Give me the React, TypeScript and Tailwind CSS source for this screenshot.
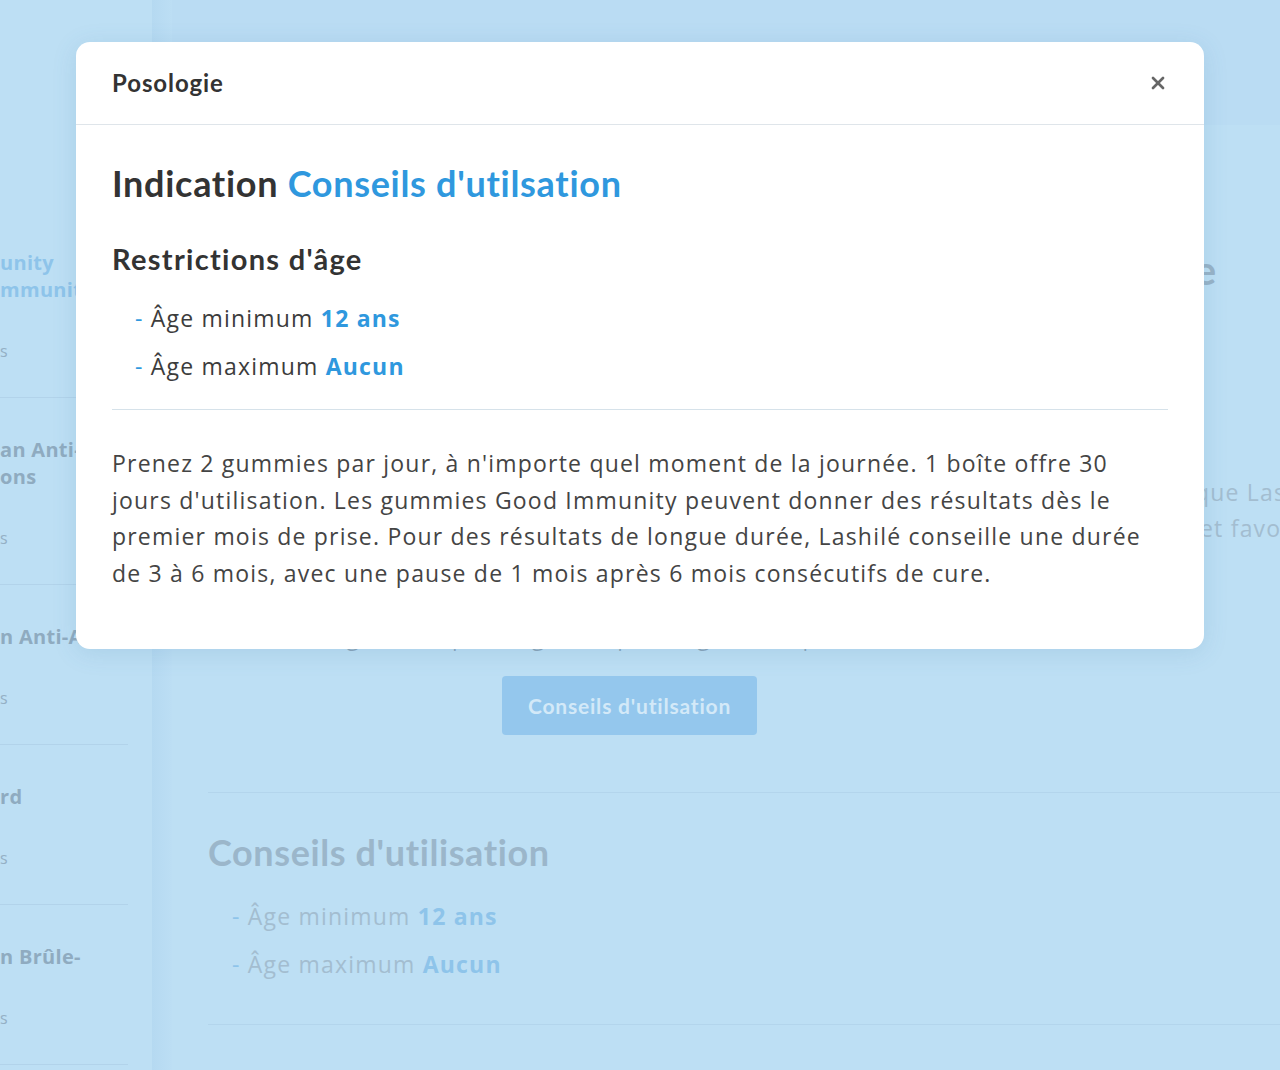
import { X } from "lucide-react";

const heading = { fontFamily: "Lato, 'Open Sans', sans-serif" };
const body = { fontFamily: "'Open Sans', 'Noto Sans', sans-serif" };

const sideItems = [
  { title: ["unity", "mmunita"], blue: true },
  { title: ["an Anti-", "ons"], blue: false },
  { title: ["n Anti-AA"], blue: false },
  { title: ["rd"], blue: false },
  { title: ["n Brûle-"], blue: false },
];

function SideItem({ title, blue }: { title: string[]; blue: boolean }) {
  return (
    <div className="border-b border-[#b2d3ea] pt-[38px] pb-[34px]">
      <div
        className={`text-[20px] font-bold leading-[27px] tracking-[0.3px] whitespace-nowrap ${blue ? "text-[#8ec4ea]" : "text-[#8fabc0]"}`}
        style={body}
      >
        {title.map((t) => (
          <div key={t}>{t}</div>
        ))}
      </div>
      <div className="mt-[36px] text-[16px] leading-[24px] text-[#94b0c5]" style={body}>
        s
      </div>
    </div>
  );
}

function BackgroundPage() {
  return (
    <div className="flex h-[1070px] w-full bg-[#bddff4]">
      {/* sidebar */}
      <div className="w-[128px] shrink-0 pt-[211px]">
        {sideItems.map((it) => (
          <SideItem key={it.title[0]} title={it.title} blue={it.blue} />
        ))}
      </div>
      <div className="w-[24px] shrink-0" />
      <div className="w-[20px] shrink-0 bg-gradient-to-r from-[#b5d9f1] to-[#bcdef4]" />

      {/* main */}
      <div className="flex min-w-0 flex-1 flex-col">
        <div className="h-[125px] bg-[#badcf3]" />
        <div className="flex justify-end pr-[64px] pt-[122px]">
          <div className="text-[40px] font-bold leading-[46px] text-[#98b3c7] whitespace-nowrap" style={heading}>
            Gummies Good Immunity Vitamine
          </div>
        </div>
        <div
          className="pl-[1023px] pt-[181px] text-[23px] leading-[36px] tracking-[1.2px] text-[#a3bdd0] whitespace-nowrap"
          style={body}
        >
          <div>que Lashilé</div>
          <div className="pl-[5px]">et favorise</div>
        </div>
        <div className="ml-[330px] mt-[75px] flex w-[255px] flex-col items-center">
          <div className="text-[23px] leading-[30px] tracking-[1.2px] text-[#8aa5ba] whitespace-nowrap" style={body}>
            Végétalien | Sans gluten | Sans gélatine | Sans OGM
          </div>
          <button
            className="mt-[25px] h-[59px] w-[255px] rounded-[4px] bg-[#94c7ed] text-[21px] font-bold tracking-[0.8px] text-[#d3e9f8]"
            style={heading}
          >
            Conseils d'utilsation
          </button>
        </div>
        <div className="ml-[36px] mt-[57px] border-t border-[#b3d5ec]" />
        <div className="pl-[36px] pt-[37px]">
          <div className="text-[36px] font-bold leading-[44px] tracking-[0.6px] text-[#9bb6ca]" style={heading}>
            Conseils d'utilisation
          </div>
          <ul className="mt-[18px] pl-[24px] text-[23px] leading-[48px] tracking-[1.2px] text-[#a3bdd0]" style={body}>
            <li>
              <span className="text-[#8ec4ea]">- </span>Âge minimum{" "}
              <span className="font-bold text-[#8ec4ea]">12 ans</span>
            </li>
            <li>
              <span className="text-[#8ec4ea]">- </span>Âge maximum{" "}
              <span className="font-bold text-[#8ec4ea]">Aucun</span>
            </li>
          </ul>
        </div>
        <div className="ml-[36px] mt-[36px] border-t border-[#b3d5ec]" />
      </div>
    </div>
  );
}

function PosologieModal() {
  return (
    <div className="w-[1128px] overflow-hidden rounded-[14px] bg-white shadow-[0_4px_24px_rgba(60,120,170,0.15)]">
      <div className="flex h-[83px] items-center justify-between border-b border-[#dfe5ea] pl-[36px] pr-[36px]">
        <div className="text-[24px] font-bold tracking-[0.9px] text-[#333333]" style={heading}>
          Posologie
        </div>
        <X size={20} strokeWidth={3.2} className="text-[#666666]" />
      </div>
      <div className="px-[36px] pt-[38px] pb-[58px]">
        <h2 className="text-[36px] font-bold leading-[40px] tracking-[0.7px] text-[#333333]" style={heading}>
          Indication <span className="text-[#2f98de]">Conseils d'utilsation</span>
        </h2>
        <h3 className="mt-[39px] text-[29px] font-bold leading-[34px] tracking-[1.3px] text-[#333333]" style={heading}>
          Restrictions d'âge
        </h3>
        <ul className="mt-[18px] pl-[23px] text-[23px] leading-[48px] tracking-[1.2px] text-[#3c3c3c]" style={body}>
          <li>
            <span className="text-[#2f98de]">- </span>Âge minimum{" "}
            <span className="font-bold text-[#2f98de]">12 ans</span>
          </li>
          <li>
            <span className="text-[#2f98de]">- </span>Âge maximum{" "}
            <span className="font-bold text-[#2f98de]">Aucun</span>
          </li>
        </ul>
        <div className="mt-[19px] border-t border-[#d6e2ea]" />
        <p className="mt-[35px] text-[23px] leading-[36.5px] tracking-[1.2px] text-[#444444]" style={body}>
          Prenez 2 gummies par jour, à n'importe quel moment de la journée. 1 boîte offre 30 jours
          d'utilisation. Les gummies Good Immunity peuvent donner des résultats dès le premier mois de
          prise. Pour des résultats de longue durée, Lashilé conseille une durée de 3 à 6 mois, avec une
          pause de 1 mois après 6 mois consécutifs de cure.
        </p>
      </div>
    </div>
  );
}

export default function App() {
  return (
    <div className="relative h-[1070px] w-full overflow-hidden">
      <BackgroundPage />
      <div className="absolute inset-0 flex items-start justify-center pt-[42px]">
        <PosologieModal />
      </div>
    </div>
  );
}
